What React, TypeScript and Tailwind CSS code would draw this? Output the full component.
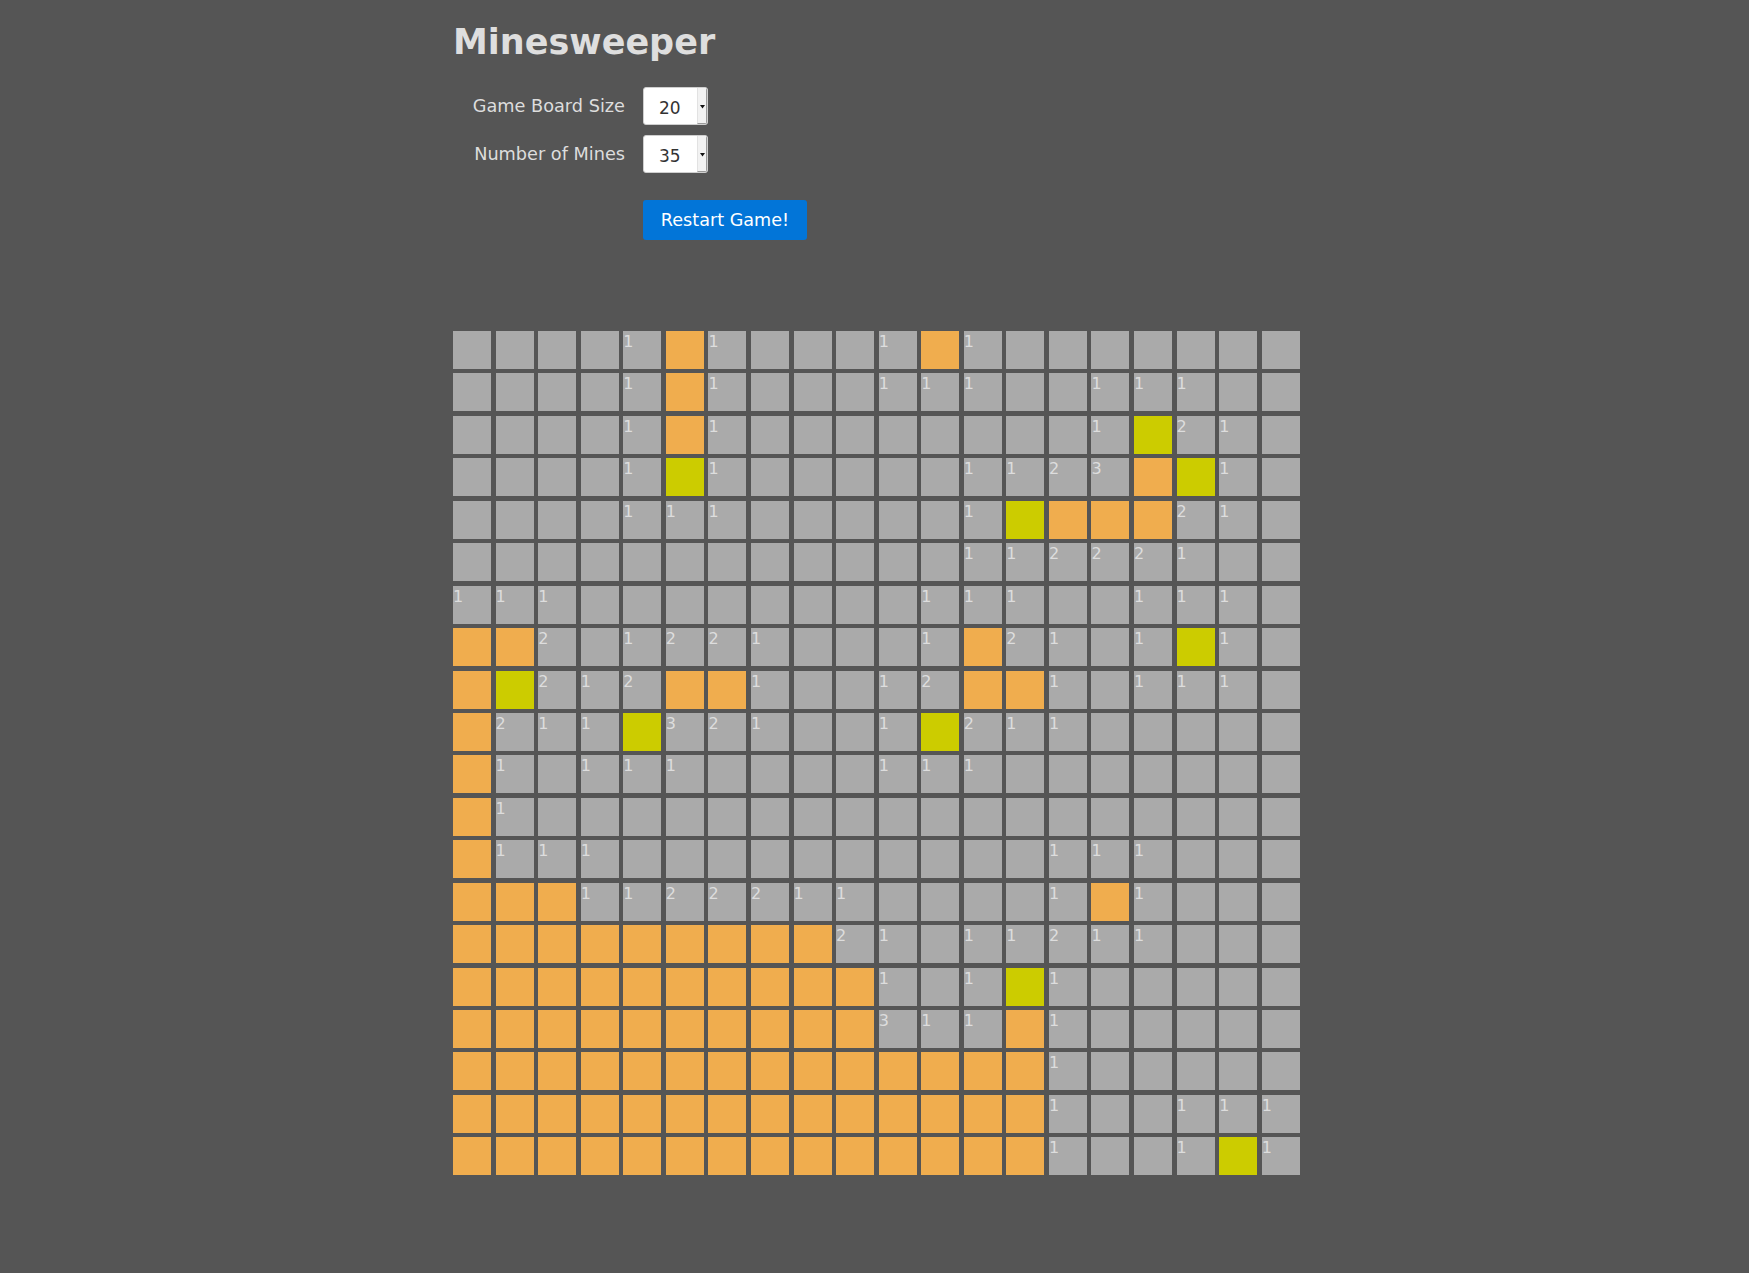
import React from 'react';

// board rows: '.' hidden, 'O' opened, 'Y' flagged, digit = neighbour count
const BOARD = [
  '....1O1...1O1.......',
  '....1O1...111..111..',
  '....1O1........1Y21.',
  '....1Y1.....1123OY1.',
  '....111.....1YOOO21.',
  '............112221..',
  '111........111..111.',
  'OO2.1221...1O21.1Y1.',
  'OY212OO1..12OO1.111.',
  'O211Y321..1Y211.....',
  'O1.111....111.......',
  'O1..................',
  'O111..........111...',
  'OOO1122211....1O1...',
  'OOOOOOOOO21.11211...',
  'OOOOOOOOOO1.1Y1.....',
  'OOOOOOOOOO311O1.....',
  'OOOOOOOOOOOOOO1.....',
  'OOOOOOOOOOOOOO1..111',
  'OOOOOOOOOOOOOO1..1Y1',
];

function Cell({ value }: { value: string }) {
  let bg = 'bg-[#aaaaaa]';
  if (value === 'O') bg = 'bg-[#f0ad4e]';
  if (value === 'Y') bg = 'bg-[#cccc00]';
  const isNum = value >= '1' && value <= '8';
  return (
    <div className={`h-[38px] w-[38px] ${bg} pt-[2px] text-[16px] leading-[18px] text-[#dddddd]`}>
      {isNum ? value : ''}
    </div>
  );
}

function FakeSelect({ value }: { value: string }) {
  return (
    <div className="flex h-[38px] w-[65px] overflow-hidden rounded-[3px] border border-[#cfcfcf] bg-white">
      <div className="flex flex-1 items-center pl-[15px] pt-[6px] text-[17px] text-[#333333]">{value}</div>
      <div className="flex w-[10px] items-center justify-center border-l border-[#e2e2e2] border-r border-b border-r-[#9a9a9a] border-b-[#9a9a9a] bg-[#f2f2f2]">
        <svg width="5" height="4" viewBox="0 0 5 4" className="mt-[2px]">
          <polygon points="0,0 5,0 2.5,3.5" fill="#111" />
        </svg>
      </div>
    </div>
  );
}

export default function App() {
  return (
    <div className="min-h-screen bg-[#555555] font-['DejaVu_Sans',sans-serif] text-[#dddddd]">
      <div className="pl-[453px] pt-[25px] pb-[96px]">
        <h1 className="text-[35px] font-bold leading-none text-[#dedede]">Minesweeper</h1>

        <div className="mt-[27px] flex flex-col gap-[10px]">
          <div className="flex items-center">
            <label className="w-[172px] text-right text-[17.7px]">Game Board Size</label>
            <div className="ml-[18px]">
              <FakeSelect value="20" />
            </div>
          </div>
          <div className="flex items-center">
            <label className="w-[172px] text-right text-[17.7px]">Number of Mines</label>
            <div className="ml-[18px]">
              <FakeSelect value="35" />
            </div>
          </div>
        </div>

        <button
          type="button"
          className="ml-[190px] mt-[27px] h-[40px] w-[164px] rounded-[3px] bg-[#0275d8] text-[17.6px] text-white"
        >
          Restart Game!
        </button>

        <div className="mt-[91px] grid w-max grid-cols-[repeat(20,38px)] gap-x-[4.57px] gap-y-[4.45px]">
          {BOARD.map((row, r) =>
            row.split('').map((v, c) => <Cell key={`${r}-${c}`} value={v} />)
          )}
        </div>
      </div>
    </div>
  );
}
